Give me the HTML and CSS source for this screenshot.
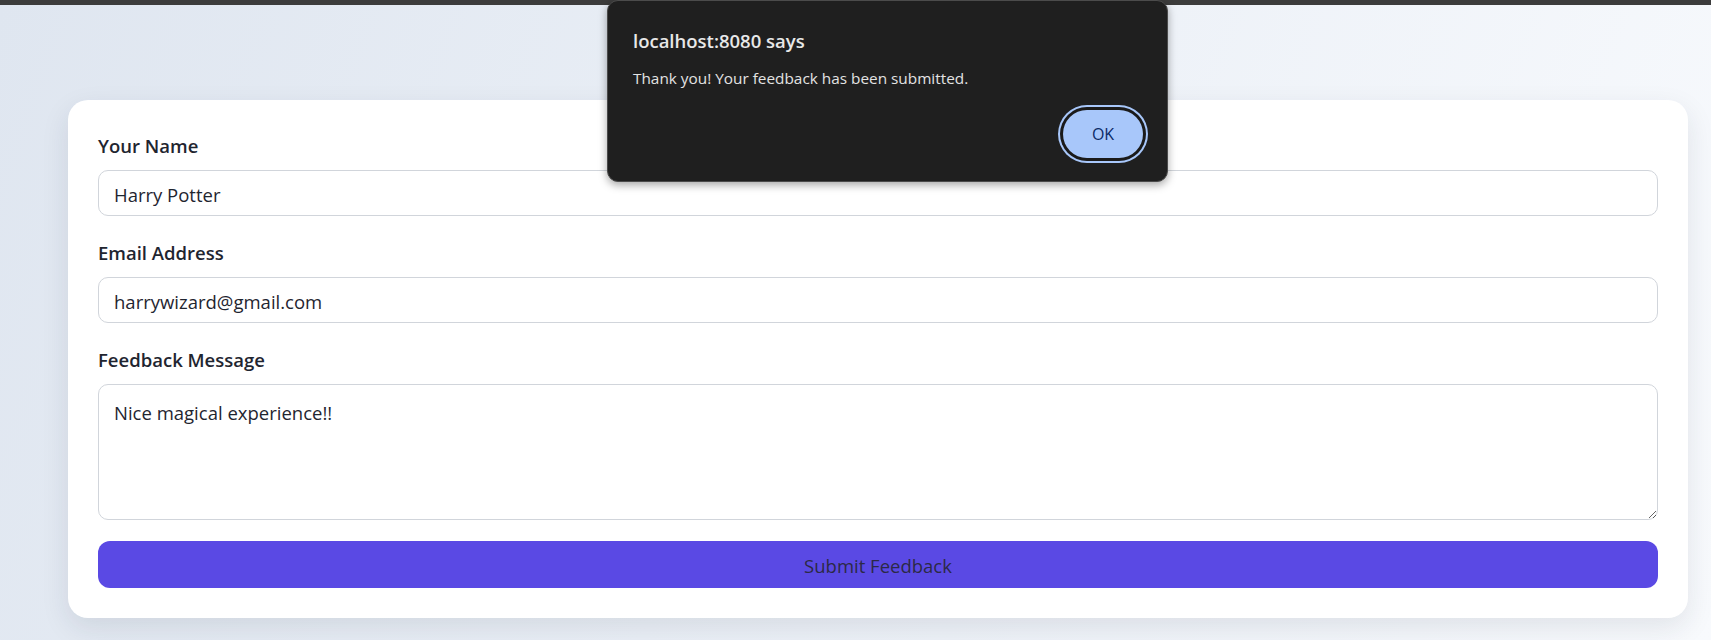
FILE: index.html
```html
<!DOCTYPE html>
<html lang="en">
<head>
<meta charset="utf-8">
<title>Feedback</title>
<link rel="stylesheet" href="styles.css">
</head>
<body>
<div class="topbar"></div>
<main class="page">
  <form class="card">
    <div class="field">
      <label class="label" for="name">Your Name</label>
      <input class="input" id="name" type="text" value="Harry Potter">
    </div>
    <div class="field">
      <label class="label" for="email">Email Address</label>
      <input class="input" id="email" type="email" value="harrywizard@gmail.com">
    </div>
    <div class="field">
      <label class="label" for="msg">Feedback Message</label>
      <textarea class="input textarea" id="msg">Nice magical experience!!</textarea>
    </div>
    <button class="submit" type="button">Submit Feedback</button>
  </form>
</main>
<div class="dialog" role="alertdialog">
  <div class="dialog-title">localhost:8080 says</div>
  <div class="dialog-msg">Thank you! Your feedback has been submitted.</div>
  <div class="dialog-actions">
    <button class="ok" type="button">OK</button>
  </div>
</div>
</body>
</html>
```
FILE: styles.css
```css
* { box-sizing: border-box; }

html, body {
  margin: 0;
  height: 640px;
  overflow: hidden;
}

body {
  font-family: "Open Sans", "Noto Sans", sans-serif;
  background: linear-gradient(110deg, #dfe6f0 0%, #eaeff6 45%, #f8fafd 100%);
  color: #1f2530;
  position: relative;
}

.topbar {
  height: 5px;
  background: #3c3c3c;
}

.page {
  padding: 95px 23px 0 68px;
}

.card {
  background: #ffffff;
  border-radius: 20px;
  padding: 30px;
  box-shadow: 0 10px 28px rgba(30, 41, 59, 0.10);
}

.field {
  margin-bottom: 21px;
}

.label {
  display: block;
  font-size: 18.5px;
  font-weight: 600;
  line-height: 30px;
  padding-top: 1px;
  margin-bottom: 9px;
  color: #1f2530;
}

.input {
  display: block;
  width: 100%;
  height: 46px;
  border: 1px solid #d1d5db;
  border-radius: 10px;
  padding: 2px 15px 0;
  font-family: "Open Sans", "Noto Sans", sans-serif;
  font-size: 18.5px;
  color: #1f2530;
  background: #ffffff;
  outline: none;
}

.textarea {
  height: 136px;
  padding: 13px 15px 11px;
  line-height: 30px;
  resize: vertical;
}

.submit {
  display: block;
  width: 100%;
  height: 47px;
  border: none;
  border-radius: 12px;
  background: #5a49e4;
  color: #2c2946;
  font-family: "Open Sans", "Noto Sans", sans-serif;
  font-size: 18.5px;
  padding-top: 2px;
}

.dialog {
  position: absolute;
  left: 607px;
  top: 0;
  width: 561px;
  height: 182px;
  background: #1f1f1f;
  border: 1px solid #4b4b4b;
  border-radius: 11px;
  box-shadow: 0 3px 8px rgba(0, 0, 0, 0.35);
  padding: 27px 24px 0 25px;
  display: flex;
  flex-direction: column;
  color: #e6e6e6;
}

.dialog-title {
  font-size: 18.5px;
  font-weight: 600;
  line-height: 25px;
  color: #e8e8e8;
}

.dialog-msg {
  font-size: 15.35px;
  line-height: 22px;
  margin-top: 14px;
  color: #e3e3e3;
}

.dialog-actions {
  display: flex;
  justify-content: flex-end;
  margin-top: 21px;
}

.ok {
  width: 80px;
  height: 48px;
  border: none;
  border-radius: 24px;
  background: #a8c7fa;
  color: #0b2a66;
  font-family: "Open Sans", "Noto Sans", sans-serif;
  font-size: 16px;
  font-weight: 500;
  box-shadow: 0 0 0 3px #1a1a1a, 0 0 0 5px #a8c7fa;
}
```
